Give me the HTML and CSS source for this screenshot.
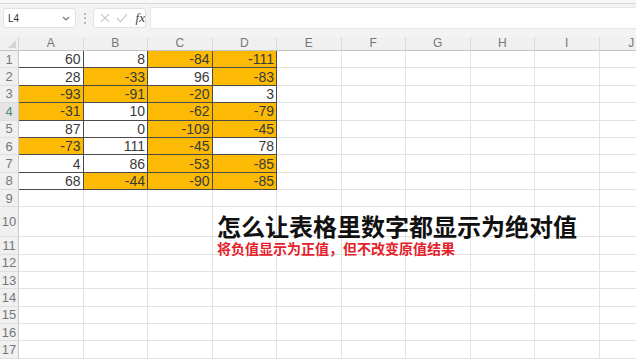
FILE: index.html
```html
<!DOCTYPE html>
<html lang="zh-CN">
<head>
    <meta charset="UTF-8">
    <meta name="viewport" content="width=device-width, initial-scale=1.0">
    <title>绝对值显示</title>
    <link rel="stylesheet" href="styles.css">
</head>
<body>
    <div class="top-edge"></div>

    <div class="formula-bar">
        <div class="name-box">
            <span>L4</span>
            <svg class="chevron" width="8" height="5" viewBox="0 0 8 5"><path d="M1 1 L4 4 L7 1" fill="none" stroke="#777" stroke-width="1.2"/></svg>
        </div>
        <div class="grip">&#x22EE;</div>
        <div class="fx-box">
            <svg width="10" height="10" viewBox="0 0 10 10"><path d="M1 1 L9 9 M9 1 L1 9" stroke="#c9c9c9" stroke-width="1.2"/></svg>
            <svg width="12" height="10" viewBox="0 0 12 10"><path d="M1 5 L4.5 9 L11 1" fill="none" stroke="#c9c9c9" stroke-width="1.2"/></svg>
            <span class="fx">fx</span>
        </div>
        <div class="formula-input"></div>
    </div>

    <div class="sheet" id="sheet">
        <div class="note">
            <div class="note-title">怎么让表格里数字都显示为绝对值</div>
            <div class="note-sub">将负值显示为正值，但不改变原值结果</div>
        </div>
    </div>

    <script>
        const cols = ['A', 'B', 'C', 'D', 'E', 'F', 'G', 'H', 'I', 'J'];
        const data = [
            [60, 8, -84, -111],
            [28, -33, 96, -83],
            [-93, -91, -20, 3],
            [-31, 10, -62, -79],
            [87, 0, -109, -45],
            [-73, 111, -45, 78],
            [4, 86, -53, -85],
            [68, -44, -90, -85]
        ];
        const sheet = document.getElementById('sheet');

        function add(cls, text) {
            const el = document.createElement('div');
            el.className = cls;
            el.textContent = text;
            sheet.appendChild(el);
        }

        // header row
        const corner = document.createElement('div');
        corner.className = 'corner';
        corner.innerHTML = '<svg width="8" height="8" viewBox="0 0 8 8"><path d="M8 0 L8 8 L0 8 Z" fill="#d4d4d4"/></svg>';
        sheet.appendChild(corner);
        cols.forEach(c => add('col-head', c));

        for (let r = 1; r <= 17; r++) {
            add(r === 4 ? 'row-head active' : 'row-head', r);
            cols.forEach((c, i) => {
                const v = data[r - 1] ? data[r - 1][i] : undefined;
                if (v === undefined) {
                    add('cell', '');
                } else {
                    add(v < 0 ? 'cell data neg' : 'cell data', v);
                }
            });
        }
    </script>
</body>
</html>
```

FILE: styles.css
```css
body {
    margin: 0;
    background-color: #fff;
    font-family: "Liberation Sans", Arial, sans-serif;
    width: 636px;
    height: 360px;
    overflow: hidden;
}
.top-edge {
    height: 3px;
    background-color: #f7f7f7;
    border-bottom: 1px solid #d9d9d9;
}
.formula-bar {
    display: flex;
    align-items: center;
    height: 33px;
    padding: 0 0 5px 3px;
    box-sizing: border-box;
    background-color: #f3f3f3;
}
.name-box {
    width: 73px;
    height: 20px;
    box-sizing: border-box;
    background-color: #fff;
    border: 1px solid #e2e2e2;
    border-radius: 3px;
    display: flex;
    align-items: center;
    justify-content: space-between;
    padding: 0 5px 0 4px;
    font-size: 10px;
    color: #333;
}
.grip {
    width: 17px;
    text-align: center;
    color: #9a9a9a;
    font-size: 12px;
}
.fx-box {
    width: 53px;
    height: 20px;
    box-sizing: border-box;
    background-color: #fff;
    border: 1px solid #e2e2e2;
    border-radius: 3px;
    display: flex;
    align-items: center;
    gap: 6px;
    padding-left: 6px;
}
.fx {
    font-family: "Liberation Serif", serif;
    font-style: italic;
    font-size: 13px;
    color: #444;
    margin-left: 2px;
}
.formula-input {
    flex-grow: 1;
    height: 20px;
    margin-left: 4px;
    background-color: #fff;
    border: 1px solid #e6e6e6;
    border-right: none;
}
.sheet {
    position: relative;
    display: grid;
    grid-template-columns: 19px repeat(10, 64.5px);
    grid-template-rows: 14px repeat(8, 17.4px) 17px 30px repeat(7, 17.4px);
}
.corner {
    background-color: #f0f0f0;
    border-right: 1px solid #d6d6d6;
    border-bottom: 1px solid #c4c4c4;
    display: flex;
    align-items: flex-end;
    justify-content: flex-end;
    padding: 0 2px 2px 0;
}
.col-head {
    background-color: #f0f0f0;
    border-right: 1px solid #dadada;
    border-bottom: 1px solid #c4c4c4;
    font-size: 12px;
    line-height: 13px;
    text-align: center;
    color: #777;
}
.row-head {
    background-color: #f0f0f0;
    border-right: 1px solid #c8c8c8;
    border-bottom: 1px solid #dedede;
    font-size: 13px;
    display: flex;
    align-items: center;
    justify-content: center;
    color: #777;
}
.row-head.active {
    background-color: #e4e4e4;
    color: #4f8a66;
}
.cell {
    border-right: 1px solid #e3e3e3;
    border-bottom: 1px solid #e3e3e3;
    font-size: 14px;
    color: #3a3a3a;
    display: flex;
    align-items: center;
    justify-content: flex-end;
    padding-right: 2px;
}
.cell.data {
    border-color: #4a4a4a;
}
.cell.neg {
    background-color: #fcba05;
}
.note {
    position: absolute;
    left: 217px;
    top: 177px;
    font-family: "Noto Sans CJK SC", sans-serif;
    font-weight: bold;
}
.note-title {
    font-size: 24px;
    line-height: 24px;
    color: #111;
}
.note-sub {
    font-size: 14px;
    line-height: 14px;
    margin-top: 3px;
    color: #e3222c;
}
```
